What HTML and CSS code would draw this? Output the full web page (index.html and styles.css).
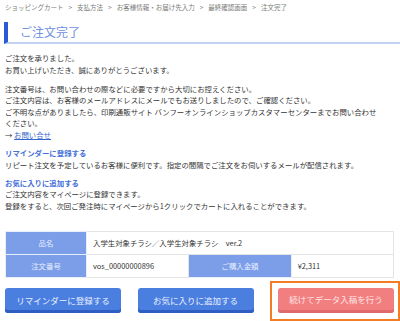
FILE: index.html
```html
<!DOCTYPE html>
<html lang="ja">
<head>
  <meta charset="utf-8">
  <title>ご注文完了</title>
  <link rel="stylesheet" href="styles.css">
</head>
<body>
  <nav class="breadcrumb">
    <span>ショッピングカート</span><span class="sep">&gt;</span><span>支払方法</span><span class="sep">&gt;</span><span>お客様情報・お届け先入力</span><span class="sep">&gt;</span><span>最終確認画面</span><span class="sep">&gt;</span><span>注文完了</span>
  </nav>

  <h1 class="page_title">ご注文完了</h1>

  <section class="thanks">
    <p>ご注文を承りました。</p>
    <p>お買い上げいただき、誠にありがとうございます。</p>
  </section>

  <section class="notes">
    <p>注文番号は、お問い合わせの際などに必要ですから大切にお控えください。<br>
    ご注文内容は、お客様のメールアドレスにメールでもお送りしましたので、ご確認ください。<br>
    <span class="nowrap">ご不明な点がありましたら、印刷通販サイト バンフーオンラインショップカスタマーセンターまでお問い合わせ</span><br>ください。<br>
    → <a href="#">お問い合せ</a></p>
  </section>

  <section class="feature">
    <h3>リマインダーに登録する</h3>
    <p>リピート注文を予定しているお客様に便利です。指定の間隔でご注文をお伺いするメールが配信されます。</p>
  </section>

  <section class="feature">
    <h3>お気に入りに追加する</h3>
    <p>ご注文内容をマイページに登録できます。<br>
    登録をすると、次回ご発注時にマイページから1クリックでカートに入れることができます。</p>
  </section>

  <table class="order_info">
    <tr>
      <th>品名</th>
      <td colspan="3">入学生対象チラシ／入学生対象チラシ　ver.2</td>
    </tr>
    <tr>
      <th>注文番号</th>
      <td class="order_no">vos_00000000896</td>
      <th>ご購入金額</th>
      <td>¥2,311</td>
    </tr>
  </table>

  <div class="actions">
    <button class="btn">リマインダーに登録する</button>
    <button class="btn">お気に入りに追加する</button>
    <div class="highlight">
      <button class="btn next">続けてデータ入稿を行う</button>
    </div>
  </div>
</body>
</html>
```

FILE: styles.css
```css
* {
  box-sizing: border-box;
}

body {
  margin: 0;
  padding: 0 6px 0 5px;
  font-family: "Noto Sans CJK JP", "Noto Sans", sans-serif;
  font-size: 7.4px;
  line-height: 11.6px;
  color: #333;
  background: #fff;
}

p {
  margin: 0;
}

a {
  color: #3366cc;
}

.nowrap {
  white-space: nowrap;
}

.breadcrumb {
  padding-top: 3px;
  height: 14px;
  font-size: 6.5px;
  line-height: 8px;
  color: #7a7a7a;
  white-space: nowrap;
}

.breadcrumb .sep {
  margin: 0 5px;
}

.page_title {
  margin: 8px -6px 0 -1px;
  height: 22px;
  padding-left: 12px;
  border-left: 4px solid #2a5bd7;
  border-bottom: 2px solid #c3d3f3;
  font-size: 12px;
  line-height: 20px;
  font-weight: normal;
  color: #7090e2;
}

.thanks {
  margin-top: 8px;
}

.thanks p + p {
  margin-top: 0.5px;
}

.notes {
  margin-top: 7px;
}

.feature {
  margin-top: 6.5px;
}

.feature h3 {
  margin: 0;
  font-size: 7.4px;
  font-weight: bold;
  color: #4470d8;
}

.order_info {
  width: 389px;
  margin-top: 19px;
  border-collapse: collapse;
  table-layout: fixed;
}

.order_info th,
.order_info td {
  height: 23px;
  padding: 0 6px;
  border: 1px solid #e4e4e4;
  font-size: 7.4px;
  text-align: left;
}

.order_info th {
  width: 81px;
  background: #7c9ee8;
  border-color: #e8eefb;
  color: #e6edff;
  font-weight: normal;
  text-align: center;
}

.order_info .order_no {
  width: 127px;
}

.actions {
  margin-top: 3px;
  display: flex;
  align-items: center;
  justify-content: space-between;
  margin-right: -6px;
}

.btn {
  width: 116px;
  height: 25px;
  border: none;
  border-radius: 3px;
  background: #4a7fe0;
  box-shadow: inset 0 -3px 0 #2e5ec4;
  padding-bottom: 3px;
  font-family: inherit;
  font-size: 8.5px;
  color: #eaf0ff;
}

.highlight {
  padding: 5px 4px 6px 6px;
  border: 2px solid #f37c24;
}

.btn.next {
  display: block;
  background: #f27f80;
  box-shadow: inset 0 -3px 0 #e06a6b;
  color: #ffe6e6;
}
```
